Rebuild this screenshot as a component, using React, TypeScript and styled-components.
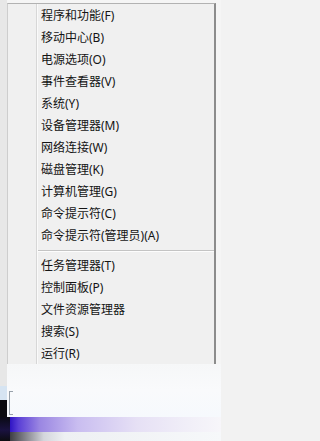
import React from "react";
import styled, { createGlobalStyle } from "styled-components";

const Global = createGlobalStyle`
  html, body { margin: 0; padding: 0; background: #f2f2f2; }
  #root { width: 221px; height: 441px; }
`;

const Screen = styled.div`
  width: 221px;
  height: 441px;
  overflow: hidden;
  display: grid;
  grid-template-rows: 417px 24px;
  background: #f3f3f3;
  font-family: "Segoe UI", "Noto Sans", "Noto Sans CJK SC", sans-serif;
`;

const Upper = styled.div`
  display: grid;
  grid-template-columns: 7px 214px;
`;

const LeftStrip = styled.div`
  display: flex;
  flex-direction: column;
`;

const StripPart = styled.div<{ $tone: "grey" | "blue" | "black" }>`
  flex: ${(p) => (p.$tone === "grey" ? "1" : "none")};
  height: ${(p) => (p.$tone === "blue" ? "14px" : p.$tone === "black" ? "17px" : "auto")};
  background: ${(p) =>
    p.$tone === "grey" ? "#e7e7e7" : p.$tone === "blue" ? "#d6e4f2" : "#0b0b10"};
`;

const Stage = styled.div`
  display: flex;
  flex-direction: column;
  padding-top: 3px;
  background: #f5f5f5;
`;

const Menu = styled.div`
  display: flex;
  width: 206px;
  border-left: 1px solid #cdcdcd;
  border-top: 1px solid #b2b2b2;
  border-right: 2px solid #8c8c8c;
  background: #f0f0f0;
`;

const Gutter = styled.div`
  width: 28px;
  border-right: 1px solid #d7d7d7;
`;

const List = styled.div`
  flex: 1;
  display: flex;
  flex-direction: column;
  border-left: 1px solid #fafafa;
`;

const Item = styled.div`
  height: 22px;
  display: flex;
  align-items: center;
  padding-left: 3px;
  font-size: 12px;
  color: #141414;
  white-space: nowrap;
`;

const Separator = styled.div`
  height: 8px;
  box-sizing: border-box;
  padding-top: 4px;
  &::before {
    content: "";
    display: block;
    border-top: 1px solid #c4c4c4;
    border-bottom: 1px solid #fdfdfd;
  }
`;

const Fade = styled.div`
  flex: 1;
  display: flex;
  align-items: flex-end;
  padding: 0 0 2px 2px;
  background: linear-gradient(to bottom, #f6f7f8 0, #f9fafc 50%, #f6f9fd 100%);
`;

const Bracket = styled.div`
  width: 3px;
  height: 22px;
  border: 1px solid #98a1aa;
  border-right: none;
`;

const Lower = styled.div`
  display: grid;
  grid-template-columns: 10px 211px;
`;

const Corner = styled.div`
  background-color: #0c0c12;
  background-image: linear-gradient(to bottom, #0a0a14 0, #1a1240 55%, #0c0c10 100%);
`;

const Taskbar = styled.div`
  display: grid;
  grid-template-rows: 15px 9px;
`;

const Glow = styled.div`
  background: linear-gradient(
    to right,
    #2f14c4 0,
    #5a3fd6 4%,
    #9a86e2 14%,
    #c9bdf0 32%,
    #e6e0f5 60%,
    #f1eff8 85%,
    #f7f6fa 100%
  );
`;

const Shade = styled.div`
  background: linear-gradient(
    to right,
    #3e3e44 0,
    #8a8a92 8%,
    #d4d6dc 16%,
    #eef0f3 26%,
    #f6f8fa 100%
  );
`;

const groupA = [
  "程序和功能(F)",
  "移动中心(B)",
  "电源选项(O)",
  "事件查看器(V)",
  "系统(Y)",
  "设备管理器(M)",
  "网络连接(W)",
  "磁盘管理(K)",
  "计算机管理(G)",
  "命令提示符(C)",
  "命令提示符(管理员)(A)",
];

const groupB = [
  "任务管理器(T)",
  "控制面板(P)",
  "文件资源管理器",
  "搜索(S)",
  "运行(R)",
];

export default function App() {
  return (
    <>
      <Global />
      <Screen>
        <Upper>
          <LeftStrip>
            <StripPart $tone="grey" />
            <StripPart $tone="blue" />
            <StripPart $tone="black" />
          </LeftStrip>
          <Stage>
            <Menu>
              <Gutter />
              <List>
                {groupA.map((t) => (
                  <Item key={t}>{t}</Item>
                ))}
                <Separator />
                {groupB.map((t) => (
                  <Item key={t}>{t}</Item>
                ))}
              </List>
            </Menu>
            <Fade>
              <Bracket />
            </Fade>
          </Stage>
        </Upper>
        <Lower>
          <Corner />
          <Taskbar>
            <Glow />
            <Shade />
          </Taskbar>
        </Lower>
      </Screen>
    </>
  );
}
